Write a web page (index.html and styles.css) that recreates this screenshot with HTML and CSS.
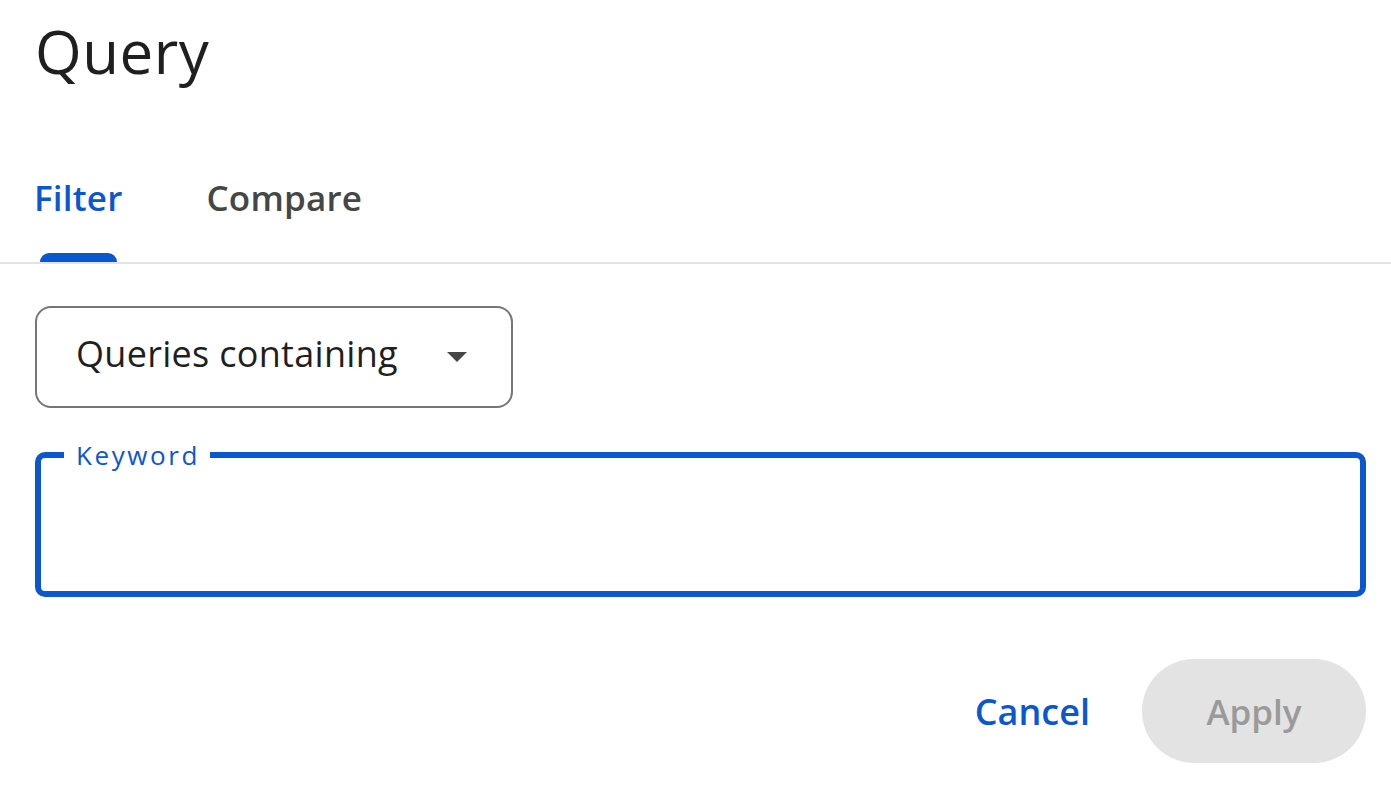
FILE: index.html
```html
<!DOCTYPE html>
<html lang="en">
<head>
<meta charset="utf-8">
<title>Query</title>
<link rel="stylesheet" href="styles.css">
</head>
<body>
<div class="dialog">
  <h1 class="title">Query</h1>
  <div class="tabs">
    <div class="tab tab-active">
      <span class="tab-label">Filter</span>
      <span class="tab-indicator"></span>
    </div>
    <div class="tab">
      <span class="tab-label">Compare</span>
      <span class="tab-indicator tab-indicator-hidden"></span>
    </div>
  </div>
  <div class="body">
    <div class="select">
      <span class="select-text">Queries containing</span>
      <svg class="caret" width="20" height="10" viewBox="0 0 20 10"><polygon points="0,0 20,0 10,10" fill="#444746"/></svg>
    </div>
    <div class="field">
      <span class="field-label">Keyword</span>
    </div>
    <div class="actions">
      <button class="btn btn-text">Cancel</button>
      <button class="btn btn-filled" disabled>Apply</button>
    </div>
  </div>
</div>
</body>
</html>
```

FILE: styles.css
```css
html, body {
  margin: 0;
  padding: 0;
  background: #ffffff;
}

body {
  font-family: "Open Sans", "Liberation Sans", sans-serif;
  color: #1f1f1f;
}

.dialog {
  width: 1391px;
}

.title {
  margin: 0;
  padding: 11px 0 0 35px;
  font-size: 60px;
  line-height: 80px;
  font-weight: 400;
  letter-spacing: 0.5px;
  color: #1f1f1f;
}

.tabs {
  display: flex;
  gap: 84px;
  padding-left: 34px;
  margin-top: 83px;
  border-bottom: 2px solid #e3e3e3;
}

.tab {
  display: flex;
  flex-direction: column;
  align-items: center;
}

.tab-label {
  font-size: 35px;
  line-height: 48px;
  font-weight: 600;
  letter-spacing: 0.2px;
  color: #444746;
}

.tab-active .tab-label {
  color: #0b57d0;
}

.tab-indicator {
  width: 77px;
  height: 9px;
  margin-top: 31px;
  background: #0b57d0;
  border-radius: 9px 9px 0 0;
}

.tab-indicator-hidden {
  visibility: hidden;
}

.body {
  padding: 0 25px 0 35px;
}

.select {
  box-sizing: border-box;
  width: 478px;
  height: 102px;
  margin-top: 42px;
  padding: 0 44px 6px 39px;
  border: 2px solid #747775;
  border-radius: 16px;
  display: flex;
  align-items: center;
  justify-content: space-between;
}

.select-text {
  font-size: 36px;
  line-height: 48px;
  letter-spacing: 0.3px;
  color: #1f1f1f;
}

.caret {
  display: block;
  margin-top: 6px;
}

.field {
  position: relative;
  box-sizing: border-box;
  height: 145px;
  margin-top: 44px;
  border: 6px solid #0b57d0;
  border-radius: 10px;
}

.field-label {
  position: absolute;
  left: 23px;
  top: -17px;
  padding: 0 10px 0 12px;
  background: #ffffff;
  font-size: 26px;
  line-height: 28px;
  letter-spacing: 2.6px;
  color: #0b57d0;
}

.actions {
  display: flex;
  justify-content: flex-end;
  align-items: center;
  gap: 22px;
  margin-top: 62px;
}

.btn {
  height: 104px;
  border: none;
  border-radius: 52px;
  font-family: "Open Sans", "Liberation Sans", sans-serif;
  font-size: 35px;
  font-weight: 600;
  background: transparent;
  cursor: pointer;
}

.btn-text {
  padding: 0 30px;
  font-size: 36px;
  color: #0b57d0;
}

.btn-filled {
  width: 224px;
  padding: 0;
  background: #e3e3e3;
  color: #9a9a9a;
}
```
